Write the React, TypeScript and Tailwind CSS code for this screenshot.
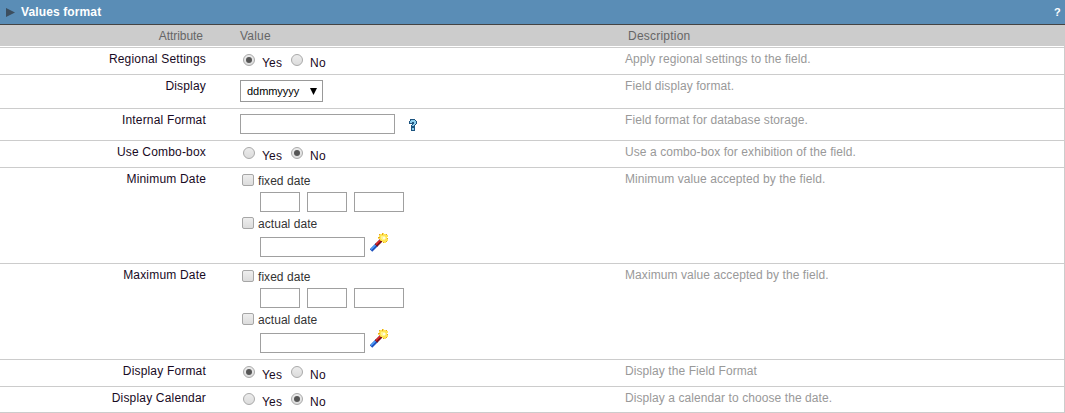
import type { ReactNode } from "react";

function Radio({ on }: { on?: boolean }) {
  return (
    <span className="flex size-3 shrink-0 items-center justify-center rounded-full border border-[#a9a9a9] bg-linear-to-b from-[#ececec] to-[#dcdcdc]">
      {on && <span className="size-1.5 rounded-full bg-[#555]" />}
    </span>
  );
}

function YesNo({ value }: { value: "yes" | "no" }) {
  return (
    <div className="flex pt-1.5 pl-[3px]">
      <Radio on={value === "yes"} />
      <span className="mt-0.5 ml-[7px] w-[29px] text-[#1a0a1e]">Yes</span>
      <Radio on={value === "no"} />
      <span className="mt-0.5 ml-[7px] text-[#1a0a1e]">No</span>
    </div>
  );
}

function Check({ label }: { label: string }) {
  return (
    <div className="flex h-3.5 pt-px pl-0.5">
      <span className="size-3 rounded-xs border border-[#a6a6a6] bg-linear-to-b from-[#eee] to-[#dcdcdc]" />
      <span className="ml-1 tracking-[0.05px] text-[#333]">{label}</span>
    </div>
  );
}

function Box({ className }: { className: string }) {
  return <span className={`h-5 shrink-0 border border-[#a0a0a0] bg-white ${className}`} />;
}

function HelpIcon() {
  return (
    <svg width="10" height="13" viewBox="0 0 10 13" shapeRendering="crispEdges">
      <path d="M2 0h5v1h1v1h1v3h-1v1h-1v6h-4v-6h1v-1h-3v-3h1z" fill="#1d5580" />
      <path d="M2 2h1v-1h4v1h1v3h-1v1h-1v1h-2v-1h1v-1h1v-2h-2v1h-2z" fill="#8ccdec" />
      <path d="M4 9h2v2h-2z" fill="#8ccdec" />
    </svg>
  );
}

function WandIcon() {
  return (
    <svg width="19" height="19" viewBox="0 0 19 19">
      <path d="M1 17.5L7 11.5" stroke="#1c50bd" strokeWidth="3.6" />
      <path d="M1 16.5L6.5 11" stroke="#4fa0fa" strokeWidth="1.5" />
      <path d="M6 12.5L12 6.5" stroke="#78111e" strokeWidth="3.6" />
      <path d="M6 11.5L11.5 6" stroke="#e52b2b" strokeWidth="1.5" />
      <g shapeRendering="crispEdges">
        <path d="M12 0h2v1h2v1h2v2h-1v2h1v2h-2v2h-2v-1h-2v-1h-2v-2h-2v-2h1v-2h1v-1h2z" fill="#ffe454" />
        <path d="M9 1h1v1h-1zM12 0h1v2h-1zM16 1h1v1h-1zM8 4h2v1h-2zM17 5h1v1h-1zM16 8h1v1h-1zM13 9h1v1h-1zM10 7h1v1h-1z" fill="#e6a71e" />
        <path d="M11 3h4v1h1v2h-1v1h-3v-1h-1z" fill="#fff58f" />
        <path d="M13 4h2v2h-2z" fill="#fffde0" />
      </g>
    </svg>
  );
}

function DateLimit() {
  return (
    <div className="pt-[5px]">
      <Check label="fixed date" />
      <div className="mt-[5px] flex gap-[7px] pl-5">
        <Box className="w-10" />
        <Box className="w-10" />
        <Box className="w-[50px]" />
      </div>
      <div className="mt-1"><Check label="actual date" /></div>
      <div className="mt-0.5 flex pl-5">
        <Box className="mt-[5px] w-[105px]" />
        <span className="mt-px ml-[5px]"><WandIcon /></span>
      </div>
    </div>
  );
}

function Row({ label, description, height, children }: { label: string; description: string; height: string; children: ReactNode }) {
  return (
    <div className={`grid grid-cols-[206px_385px_1fr] border-b border-[#ccc] ${height}`}>
      <div className="pt-1 text-right tracking-[0.18px] text-[#180a24]">{label}</div>
      <div className="pl-[34px]">{children}</div>
      <div className="pt-1 pl-[34px] tracking-[0.08px] text-[#999]">{description}</div>
    </div>
  );
}

export default function App() {
  return (
    <div className="h-[413px] w-[1065px] overflow-hidden bg-white font-['Liberation_Sans',Arial,sans-serif] text-[12px] leading-[14px] tracking-[0.22px]">
      <div className="flex h-[25px] items-center border-b border-[#444] bg-[#5a8db6] pr-1 pl-1.5 font-bold text-white">
        <svg width="9" height="9" viewBox="0 0 9 9"><path d="M0 0L9 4.5L0 9z" fill="#3c4e5e" /></svg>
        <span className="ml-1.5 tracking-[0.12px]">Values format</span>
        <span className="ml-auto text-[11px]">?</span>
      </div>
      <div className="border-r border-[#ccc]">
        <div className="grid h-[21px] grid-cols-[203px_37px_388px_1fr] items-center bg-[#ccc] text-[#666]">
          <span className="text-right tracking-[-0.05px]">Attribute</span>
          <span />
          <span>Value</span>
          <span>Description</span>
        </div>
        <div className="h-0.5 border-b border-[#ccc]" />
        <Row label="Regional Settings" description="Apply regional settings to the field." height="h-[27px]"><YesNo value="yes" /></Row>
        <Row label="Display" description="Field display format." height="h-[34px]">
          <div className="mt-[5px] flex h-[22px] w-[83px] items-center justify-between border border-[#999] pr-[5px] pl-1.5 text-[11px] tracking-[-0.05px] text-black">
            ddmmyyyy
            <svg width="7" height="7" viewBox="0 0 7 7"><path d="M0 0H7L3.5 7z" /></svg>
          </div>
        </Row>
        <Row label="Internal Format" description="Field format for database storage." height="h-[32px]">
          <div className="flex pt-[5px]">
            <Box className="w-[155px]" />
            <span className="mt-[5px] ml-[13px]"><HelpIcon /></span>
          </div>
        </Row>
        <Row label="Use Combo-box" description="Use a combo-box for exhibition of the field." height="h-[27px]"><YesNo value="no" /></Row>
        <Row label="Minimum Date" description="Minimum value accepted by the field." height="h-[96px]"><DateLimit /></Row>
        <Row label="Maximum Date" description="Maximum value accepted by the field." height="h-[96px]"><DateLimit /></Row>
        <Row label="Display Format" description="Display the Field Format" height="h-[27px]"><YesNo value="yes" /></Row>
        <Row label="Display Calendar" description="Display a calendar to choose the date." height="h-[26px]"><YesNo value="no" /></Row>
      </div>
    </div>
  );
}
